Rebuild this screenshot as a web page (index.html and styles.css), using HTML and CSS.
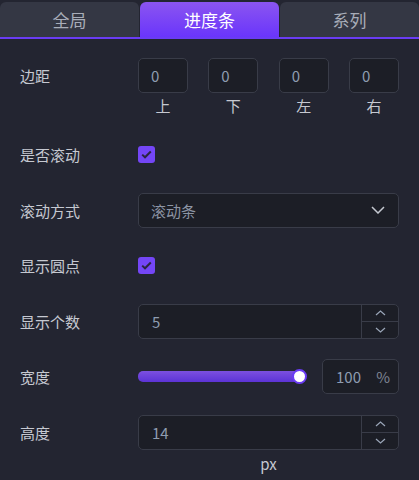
FILE: index.html
```html
<!DOCTYPE html>
<html lang="zh">
<head>
<meta charset="utf-8">
<link rel="stylesheet" href="styles.css">
</head>
<body>
<div class="tabs">
  <div class="tab">全局</div>
  <div class="tab active">进度条</div>
  <div class="tab">系列</div>
</div>
<div class="form">
  <div class="row row-margin">
    <div class="label">边距</div>
    <div class="margins">
      <div class="mcell"><div class="box">0</div><div class="sub">上</div></div>
      <div class="mcell"><div class="box">0</div><div class="sub">下</div></div>
      <div class="mcell"><div class="box">0</div><div class="sub">左</div></div>
      <div class="mcell"><div class="box">0</div><div class="sub">右</div></div>
    </div>
  </div>
  <div class="row">
    <div class="label">是否滚动</div>
    <div class="check"><svg width="11" height="9" viewBox="0 0 11 9"><path d="M1.2 4.6 L4 7.3 L9.8 1.5" fill="none" stroke="#2b2540" stroke-width="2"/></svg></div>
  </div>
  <div class="row">
    <div class="label">滚动方式</div>
    <div class="select"><span>滚动条</span><svg width="14" height="8" viewBox="0 0 14 8"><path d="M1 1 L7 7 L13 1" fill="none" stroke="#c4c8d0" stroke-width="1.5"/></svg></div>
  </div>
  <div class="row">
    <div class="label">显示圆点</div>
    <div class="check"><svg width="11" height="9" viewBox="0 0 11 9"><path d="M1.2 4.6 L4 7.3 L9.8 1.5" fill="none" stroke="#2b2540" stroke-width="2"/></svg></div>
  </div>
  <div class="row">
    <div class="label">显示个数</div>
    <div class="number">
      <span class="val">5</span>
      <div class="stepper">
        <div class="step"><svg width="11" height="6" viewBox="0 0 11 6"><path d="M1 5 L5.5 1 L10 5" fill="none" stroke="#9aa6b8" stroke-width="1.2"/></svg></div>
        <div class="step"><svg width="11" height="6" viewBox="0 0 11 6"><path d="M1 1 L5.5 5 L10 1" fill="none" stroke="#9aa6b8" stroke-width="1.2"/></svg></div>
      </div>
    </div>
  </div>
  <div class="row">
    <div class="label">宽度</div>
    <div class="sliderwrap">
      <div class="slider"><div class="track"></div><div class="thumb"></div></div>
      <div class="pct"><span>100</span><span class="unit">%</span></div>
    </div>
  </div>
  <div class="row">
    <div class="label">高度</div>
    <div class="number">
      <span class="val">14</span>
      <div class="stepper">
        <div class="step"><svg width="11" height="6" viewBox="0 0 11 6"><path d="M1 5 L5.5 1 L10 5" fill="none" stroke="#9aa6b8" stroke-width="1.2"/></svg></div>
        <div class="step"><svg width="11" height="6" viewBox="0 0 11 6"><path d="M1 1 L5.5 5 L10 1" fill="none" stroke="#9aa6b8" stroke-width="1.2"/></svg></div>
      </div>
    </div>
  </div>
  <div class="px">px</div>
</div>
</body>
</html>
```
FILE: styles.css
```css
* { box-sizing: border-box; }
html, body { margin: 0; padding: 0; }
body {
  width: 419px;
  height: 480px;
  overflow: hidden;
  background: #232531;
  font-family: "Noto Sans CJK SC", "Noto Sans", sans-serif;
  color: #c6c9d1;
}
.tabs {
  display: flex;
  gap: 1px;
  padding-top: 2px;
  border-bottom: 2px solid #6a3cf4;
}
.tab {
  flex: 1;
  height: 35px;
  background: #343744;
  border-radius: 6px 6px 0 0;
  display: flex;
  align-items: center;
  justify-content: center;
  font-size: 17px;
  color: #a8adb9;
}
.tab.active {
  background: linear-gradient(to bottom, #8b55f0, #6a35fb);
  color: #ffffff;
}
.form {
  padding: 19px 20px 0 20px;
}
.row {
  display: flex;
  align-items: center;
  height: 35px;
  margin-bottom: 20.5px;
}
.row-margin {
  height: 58.5px;
  align-items: flex-start;
}
.row-margin .label { line-height: 35px; }
.label {
  width: 118px;
  flex: none;
  font-size: 15px;
  color: #c6c9d1;
}
.margins {
  flex: 1;
  display: flex;
  justify-content: space-between;
}
.mcell {
  width: 50px;
  display: flex;
  flex-direction: column;
  align-items: center;
}
.box {
  width: 50px;
  height: 35px;
  border: 1px solid #393c48;
  border-radius: 5px;
  background: #1c1e26;
  font-size: 15px;
  color: #8e9cb0;
  padding-left: 12px;
  line-height: 33px;
  align-self: stretch;
}
.sub {
  margin-top: 3px;
  font-size: 15px;
  line-height: 20px;
  color: #c6c9d1;
}
.check {
  width: 17px;
  height: 17px;
  border-radius: 3px;
  background: #7446f6;
  display: flex;
  align-items: center;
  justify-content: center;
}
.select {
  flex: 1;
  height: 35px;
  border: 1px solid #393c48;
  border-radius: 5px;
  background: #1c1e26;
  display: flex;
  align-items: center;
  justify-content: space-between;
  padding: 0 13px 0 12px;
  font-size: 15px;
  color: #8c94a4;
}
.number {
  flex: 1;
  height: 35px;
  border: 1px solid #393c48;
  border-radius: 5px;
  background: #1c1e26;
  display: flex;
  align-items: stretch;
}
.number .val {
  flex: 1;
  padding-left: 13px;
  font-size: 15px;
  line-height: 33px;
  color: #8e9cb0;
}
.stepper {
  width: 37px;
  border-left: 1px solid #393c48;
  display: flex;
  flex-direction: column;
}
.step {
  flex: 1;
  display: flex;
  align-items: center;
  justify-content: center;
}
.step + .step { border-top: 1px solid #393c48; }
.sliderwrap {
  flex: 1;
  display: flex;
  align-items: center;
  gap: 15px;
}
.slider {
  flex: 1;
  height: 16px;
  display: flex;
  align-items: center;
}
.track {
  flex: 1;
  height: 11px;
  border-radius: 5px 0 0 5px;
  background: linear-gradient(to bottom, #7c50e0, #5c33d6);
}
.thumb {
  width: 15px;
  height: 15px;
  margin-left: -8px;
  border-radius: 50%;
  background: #ffffff;
  border: 2px solid #6a3cf4;
}
.pct {
  width: 77px;
  height: 35px;
  border: 1px solid #393c48;
  border-radius: 5px;
  background: #1c1e26;
  display: flex;
  align-items: center;
  justify-content: space-between;
  padding: 0 8px 0 13px;
  font-size: 15px;
  color: #8e9cb0;
}
.pct .unit { color: #7f8594; }
.px {
  margin-top: -16px;
  margin-left: 118px;
  text-align: center;
  font-size: 15px;
  color: #c6c9d1;
  line-height: 20px;
}
```
